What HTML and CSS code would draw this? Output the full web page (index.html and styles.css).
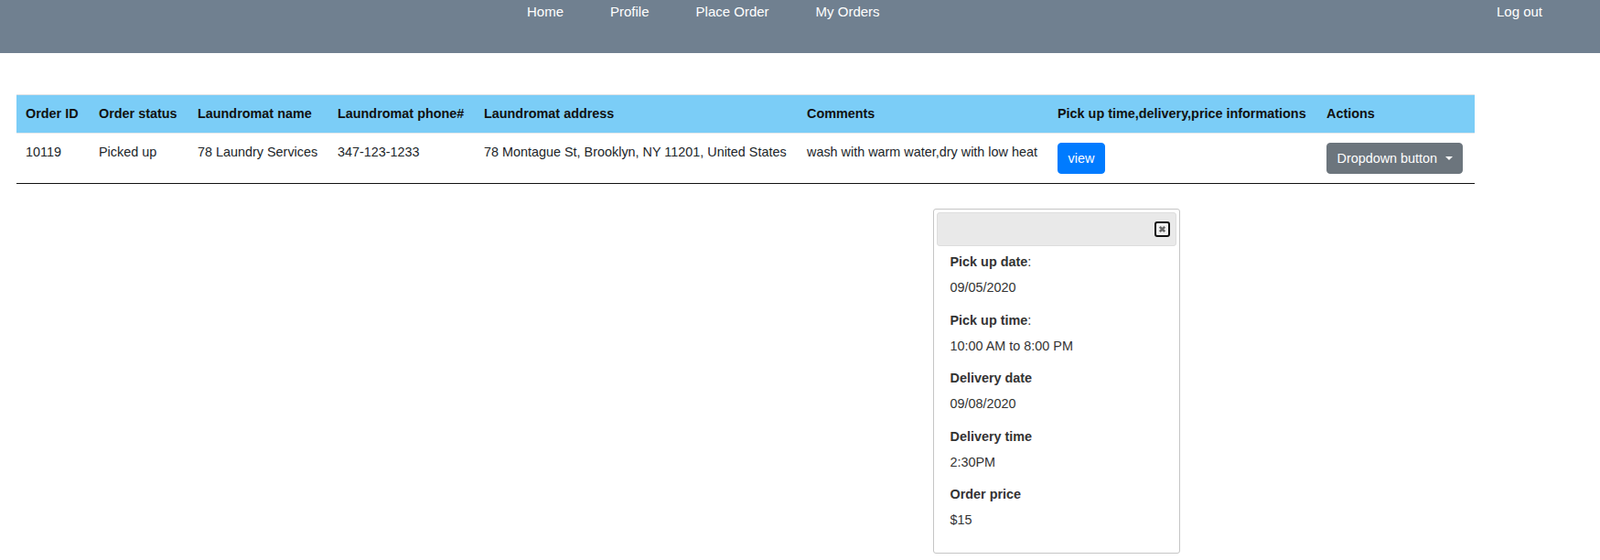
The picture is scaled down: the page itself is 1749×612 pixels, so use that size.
FILE: index.html
```html
<!DOCTYPE html>
<html lang="en">
<head>
<meta charset="utf-8">
<title>My Orders</title>
<link rel="stylesheet" href="styles.css">
</head>
<body>
<nav class="topnav">
  <ul class="nav-links">
    <li><a href="#">Home</a></li>
    <li><a href="#">Profile</a></li>
    <li><a href="#">Place Order</a></li>
    <li><a href="#">My Orders</a></li>
  </ul>
  <a class="logout" href="#">Log out</a>
</nav>

<main class="page">
  <table class="orders">
    <thead>
      <tr>
        <th class="c-id">Order ID</th>
        <th class="c-status">Order status</th>
        <th class="c-name">Laundromat name</th>
        <th class="c-phone">Laundromat phone#</th>
        <th class="c-addr">Laundromat address</th>
        <th class="c-comm">Comments</th>
        <th class="c-info">Pick up time,delivery,price informations</th>
        <th class="c-act">Actions</th>
      </tr>
    </thead>
    <tbody>
      <tr>
        <td>10119</td>
        <td>Picked up</td>
        <td>78 Laundry Services</td>
        <td>347-123-1233</td>
        <td>78 Montague St, Brooklyn, NY 11201, United States</td>
        <td>wash with warm water,dry with low heat</td>
        <td><button class="btn btn-primary" type="button">view</button></td>
        <td><button class="btn btn-secondary dropdown-toggle" type="button">Dropdown button</button></td>
      </tr>
    </tbody>
  </table>
</main>

<div class="dialog">
  <div class="dialog-titlebar">
    <button class="dialog-close" type="button" aria-label="Close">
      <svg width="9" height="9" viewBox="0 0 9 9" aria-hidden="true">
        <path d="M1.8 1.8 L7.2 7.2 M7.2 1.8 L1.8 7.2" stroke="#666" stroke-width="2.6" stroke-linecap="butt"/>
      </svg>
    </button>
  </div>
  <div class="dialog-content">
    <div class="field-label"><b>Pick up date</b>:</div>
    <div class="field-value">09/05/2020</div>
    <div class="field-label"><b>Pick up time</b>:</div>
    <div class="field-value">10:00 AM to 8:00 PM</div>
    <div class="field-label"><b>Delivery date</b></div>
    <div class="field-value">09/08/2020</div>
    <div class="field-label"><b>Delivery time</b></div>
    <div class="field-value">2:30PM</div>
    <div class="field-label"><b>Order price</b></div>
    <div class="field-value">$15</div>
  </div>
</div>
</body>
</html>
```

FILE: styles.css
```css
* {
  box-sizing: border-box;
}

html, body {
  margin: 0;
  padding: 0;
  background: #fff;
}

body {
  font-family: "Liberation Sans", Arial, sans-serif;
  font-size: 14.4px;
  color: #212529;
}

/* top navigation */
.topnav {
  display: flex;
  align-items: flex-start;
  height: 58px;
  background: #708090;
  padding-top: 4px;
}

.nav-links {
  display: flex;
  gap: 51px;
  list-style: none;
  margin: 0 0 0 576px;
  padding: 0;
}

.topnav a {
  color: #fff;
  text-decoration: none;
  font-size: 15px;
  line-height: 17px;
}

.logout {
  margin-left: auto;
  margin-right: 63px;
}

/* page */
.page {
  padding: 45px 18px 0;
}

.orders {
  width: 1594px;
  table-layout: fixed;
  border-collapse: separate;
  border-spacing: 0;
  border-bottom: 1px solid #111;
}

.orders th,
.orders td {
  text-align: left;
  vertical-align: top;
  padding: 10px;
  line-height: 21px;
  white-space: nowrap;
}

.orders th {
  background: #7bcdf7;
  color: #111;
  font-weight: bold;
  border-top: 1px solid #dee2e6;
  border-bottom: 1px solid #e3e8ec;
}

.c-id { width: 80px; }
.c-status { width: 108px; }
.c-name { width: 153px; }
.c-phone { width: 160px; }
.c-addr { width: 353px; }
.c-comm { width: 274px; }
.c-info { width: 294px; }
.c-act { width: 172px; }

/* buttons */
.btn {
  display: inline-block;
  vertical-align: top;
  font-family: inherit;
  font-size: 14.4px;
  line-height: 21px;
  padding: 5.5px 10.5px;
  border: 1px solid transparent;
  border-radius: 4px;
  color: #fff;
  cursor: pointer;
}

.btn-primary {
  background: #007bff;
  border-color: #007bff;
}

.btn-secondary {
  background: #6c757d;
  border-color: #6c757d;
}

.dropdown-toggle::after {
  content: "";
  display: inline-block;
  margin-left: 8.5px;
  vertical-align: 3px;
  border-top: 4.5px solid #fff;
  border-left: 4.3px solid transparent;
  border-right: 4.3px solid transparent;
}

/* dialog */
.dialog {
  position: absolute;
  left: 1020px;
  top: 228px;
  width: 270px;
  padding: 3px;
  background: #fff;
  border: 1px solid #c5c5c5;
  border-radius: 3px;
  color: #333;
}

.dialog-titlebar {
  display: flex;
  justify-content: flex-end;
  align-items: center;
  height: 37px;
  padding-right: 6px;
  background: #e9e9e9;
  border: 1px solid #ddd;
  border-radius: 3px;
}

.dialog-close {
  display: flex;
  align-items: center;
  justify-content: center;
  width: 17px;
  height: 17px;
  padding: 0;
  background: #f0f0f0;
  border: 2px solid #111;
  border-radius: 3px;
}

.dialog-content {
  padding: 7px 15px 7px 14.5px;
}

.field-label,
.field-value {
  line-height: 20px;
}

.field-label {
  margin-bottom: 8px;
}

.field-value {
  margin-bottom: 15.6px;
}
```
